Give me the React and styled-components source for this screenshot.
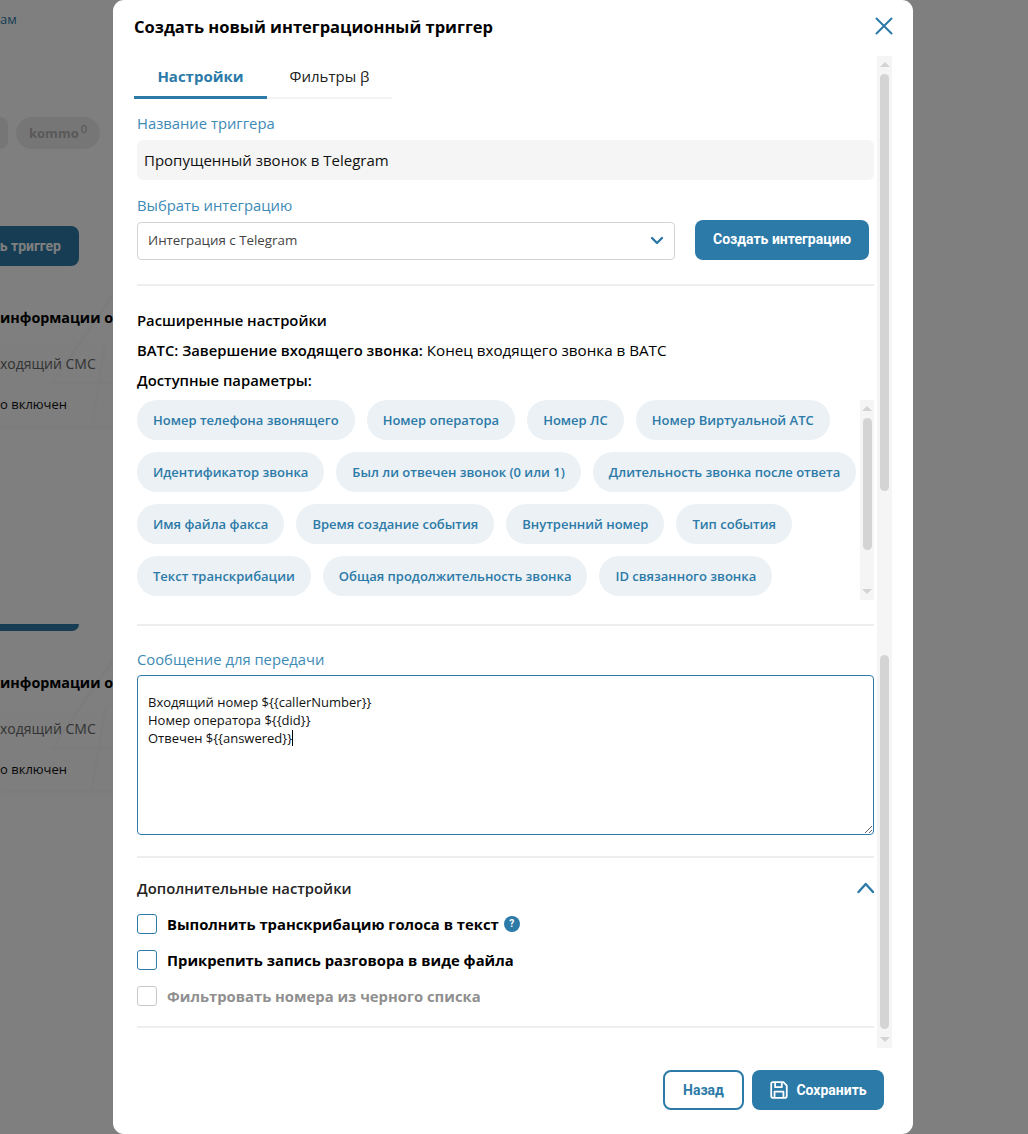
import React from "react";
import styled, { createGlobalStyle } from "styled-components";

const blue = "#2c7aa8";

const Global = createGlobalStyle`
  html, body { margin: 0; padding: 0; overflow: hidden; background: #fff; }
  * { box-sizing: border-box; }
  body { font-family: "Open Sans", "Liberation Sans", sans-serif; color: #000; }
`;

const Page = styled.div`
  position: relative;
  width: 1028px;
  height: 1134px;
  overflow: hidden;
`;

/* page behind the dialog */
const BackColumn = styled.div`
  width: 113px;
  height: 1134px;
  overflow: hidden;
  display: flex;
  flex-direction: column;
  white-space: nowrap;
`;
const BackLink = styled.div`
  margin-top: 10px;
  height: 18px;
  font-size: 13px;
  line-height: 18px;
  color: ${blue};
`;
const BackChips = styled.div`
  display: flex;
  gap: 8px;
  margin: 89px 0 0 0;
`;
const BackChip = styled.div`
  height: 32px;
  width: ${(p) => p.$w}px;
  border-radius: ${(p) => p.$radius};
  background: #ececec;
  font-size: 13px;
  font-weight: 700;
  color: #b2b2b2;
  display: flex;
  align-items: center;
  justify-content: center;
  sup { font-size: 11px; font-weight: 400; margin: -10px 0 0 2px; color: #aaa; }
`;
const BackButton = styled.div`
  margin: 77px 0 0 0;
  width: 79px;
  height: 40px;
  border-radius: 0 8px 8px 0;
  background: ${blue};
  color: #fff;
  font: 700 14px Roboto, sans-serif;
  display: flex;
  align-items: center;
  justify-content: flex-end;
  padding-right: 18px;
`;
const BackBar = styled.div`
  margin: 199px 0 0 0;
  width: 79px;
  height: 7px;
  border-radius: 0 0 8px 0;
  background: ${blue};
`;
const BackCard = styled.div`
  position: relative;
  width: 113px;
  height: 140px;
  margin-top: ${(p) => p.$top}px;
  background: linear-gradient(#ffffff, #fcfcfc);
  box-shadow: 0 3px 6px rgba(0, 0, 0, 0.04);
  display: flex;
  flex-direction: column;
  svg { position: absolute; inset: 0; }
`;
const BackTitle = styled.div`
  position: relative;
  margin: 22px 0 0 0;
  height: 22px;
  font-size: 14.3px;
  line-height: 22px;
  font-weight: 700;
`;
const BackSub = styled.div`
  position: relative;
  margin: 25px 0 0 0;
  height: 20px;
  font-size: 14px;
  line-height: 20px;
  color: #666;
`;
const BackNote = styled.div`
  position: relative;
  margin: 21px 0 0 0;
  height: 18px;
  font-size: 13px;
  line-height: 18px;
  color: #111;
`;
const Shade = styled.div`
  position: absolute;
  inset: 0;
  background: rgba(0, 0, 0, 0.5);
`;

/* dialog */
const Modal = styled.div`
  position: absolute;
  left: 113px;
  top: 0;
  width: 800px;
  height: 1134px;
  background: #fff;
  border-radius: 11px;
  padding: 0 21px;
  display: flex;
  flex-direction: column;
`;
const Header = styled.div`
  height: 56px;
  display: flex;
  justify-content: space-between;
  align-items: flex-start;
`;
const Title = styled.h2`
  margin: 15px 0 0;
  font-size: 16.5px;
  line-height: 24px;
  font-weight: 700;
`;
const CloseIcon = styled.svg`
  width: 18px;
  height: 18px;
  margin: 17px -1px 0 0;
  fill: none;
  stroke: ${blue};
  stroke-width: 2;
  stroke-linecap: round;
`;
const Body = styled.div`
  width: 758px;
  height: 992px;
  display: flex;
`;
const Content = styled.div`
  width: 743px;
  display: flex;
  flex-direction: column;
`;
const Tabs = styled.div`
  display: flex;
  width: 258px;
  height: 43px;
  border-bottom: 2px solid #f3f3f3;
`;
const Tab = styled.div`
  width: ${(p) => (p.$active ? 133 : 125)}px;
  height: 43px;
  text-align: center;
  padding-top: 9px;
  font-size: 15px;
  line-height: 22px;
  font-weight: ${(p) => (p.$active ? 700 : 400)};
  color: ${(p) => (p.$active ? blue : "#222")};
  border-bottom: ${(p) => (p.$active ? `3px solid ${blue}` : "none")};
`;
const Section = styled.div`
  padding: 0 3px;
  display: flex;
  flex-direction: column;
`;
const Label = styled.div`
  font-size: 14.8px;
  line-height: 20px;
  color: #3d8ab5;
  margin-top: ${(p) => p.$top}px;
  margin-bottom: ${(p) => p.$bottom}px;
`;
const NameInput = styled.div`
  height: 40px;
  border-radius: 6px;
  background: #f5f5f5;
  padding: 0 7px;
  font-size: 15px;
  line-height: 40px;
  color: #111;
`;
const SelectRow = styled.div`
  display: flex;
  align-items: center;
  gap: 20px;
  height: 40px;
  margin-top: -2px;
  padding-right: 5px;
`;
const Select = styled.div`
  width: 538px;
  height: 38px;
  margin-top: 2px;
  border: 1px solid #d3d3d3;
  border-radius: 4px;
  padding: 0 10px 2px;
  display: flex;
  align-items: center;
  justify-content: space-between;
  font-size: 13.33px;
  color: #444;
`;
const Chevron = styled.svg`
  width: ${(p) => p.$size}px;
  height: ${(p) => p.$size}px;
  fill: none;
  stroke: ${blue};
  stroke-width: ${(p) => p.$stroke};
  stroke-linecap: round;
  stroke-linejoin: round;
`;
const PrimaryButton = styled.button`
  height: 40px;
  width: ${(p) => p.$w}px;
  border: none;
  border-radius: 8px;
  background: ${blue};
  color: #fff;
  font: 700 14px Roboto, sans-serif;
  display: flex;
  align-items: center;
  justify-content: center;
  gap: 7px;
  padding: 0 0 ${(p) => p.$lift || 0}px;
`;
const Divider = styled.div`
  height: 2px;
  background: #eeeeee;
  margin-top: ${(p) => p.$top}px;
`;
const Info = styled.div`
  font-size: ${(p) => (p.$weight ? 14.8 : 15.2)}px;
  line-height: 20px;
  margin-top: ${(p) => p.$top}px;
  font-weight: ${(p) => p.$weight || 400};
  b { font-weight: 600; font-size: 14.8px; }
`;
const ParamsBox = styled.div`
  display: flex;
  height: 200px;
  margin-top: 10px;
`;
const Chips = styled.div`
  flex: 1;
  display: flex;
  flex-wrap: wrap;
  gap: 12px;
  align-content: flex-start;
`;
const Chip = styled.div`
  height: 40px;
  border-radius: 20px;
  background: #ebf1f5;
  padding: 0 16px;
  font-size: 13px;
  line-height: 40px;
  font-weight: 600;
  color: ${blue};
  white-space: nowrap;
`;
const Track = styled.div`
  width: ${(p) => p.$w}px;
  height: 100%;
  background: #f5f5f5;
  display: flex;
  flex-direction: column;
  align-items: center;
  flex: none;
`;
const ArrowUp = styled.div`
  flex: none;
  width: 0;
  height: 0;
  margin: 6px 0 4px;
  border-left: 5px solid transparent;
  border-right: 5px solid transparent;
  border-bottom: 5px solid #d4d4d4;
`;
const ArrowDown = styled.div`
  flex: none;
  width: 0;
  height: 0;
  margin: auto 0 6px;
  border-left: 5px solid transparent;
  border-right: 5px solid transparent;
  border-top: 5px solid #d4d4d4;
`;
const Thumb = styled.div`
  flex: none;
  width: 9px;
  height: ${(p) => p.$h}px;
  margin-top: ${(p) => p.$top || 0}px;
  border-radius: 5px;
  background: #d4d4d4;
`;
const Message = styled.div`
  height: 160px;
  border: 1px solid ${blue};
  border-radius: 4px;
  padding: 17px 10px;
  font-size: 13px;
  line-height: 18px;
  color: #111;
  overflow: auto;
  resize: both;
  white-space: pre-wrap;
`;
const Caret = styled.span`
  display: inline-block;
  width: 1px;
  height: 16px;
  vertical-align: -3px;
  background: #000;
`;
const ExtraHeader = styled.div`
  display: flex;
  align-items: center;
  justify-content: space-between;
  height: 20px;
  margin-top: 20px;
  font-size: 14.8px;
  font-weight: 600;
  color: #222;
`;
const CheckRow = styled.label`
  display: flex;
  align-items: center;
  gap: 10px;
  height: 20px;
  margin-top: 16px;
  font-size: 14.8px;
  font-weight: 700;
  color: ${(p) => (p.$off ? "#8f8f8f" : "#000")};
`;
const Box = styled.span`
  width: 20px;
  height: 20px;
  border: 1px solid ${(p) => (p.$off ? "#c8c8c8" : blue)};
  border-radius: 3px;
  flex: none;
`;
const Help = styled.span`
  width: 16px;
  height: 16px;
  border-radius: 50%;
  background: ${blue};
  color: #fff;
  margin-left: -5px;
  font: 700 10px/16px Roboto, sans-serif;
  text-align: center;
`;
const Footer = styled.div`
  display: flex;
  justify-content: flex-end;
  gap: 8px;
  margin-top: 22px;
  padding-right: 8px;
  width: 758px;
`;
const OutlineButton = styled.button`
  width: 81px;
  height: 40px;
  border: 2px solid ${blue};
  border-radius: 8px;
  background: #fff;
  color: ${blue};
  font: 700 14px Roboto, sans-serif;
  padding: 0;
`;
const SaveIcon = styled.svg`
  width: 20px;
  height: 20px;
  fill: none;
  stroke: #fff;
  stroke-width: 1.6;
  stroke-linejoin: round;
`;

const params = [
  "Номер телефона звонящего", "Номер оператора", "Номер ЛС", "Номер Виртуальной АТС",
  "Идентификатор звонка", "Был ли отвечен звонок (0 или 1)", "Длительность звонка после ответа",
  "Имя файла факса", "Время создание события", "Внутренний номер", "Тип события",
  "Текст транскрибации", "Общая продолжительность звонка", "ID связанного звонка",
];

function CardArt() {
  return (
    <svg width="113" height="140" viewBox="0 0 113 140" fill="none" stroke="#f9f9f9" strokeWidth="3">
      <path d="M113 10 L52 98 H113 M92 140 L105 60" />
    </svg>
  );
}

function BackCardBlock({ top }) {
  return (
    <BackCard $top={top}>
      <CardArt />
      <BackTitle>информации о</BackTitle>
      <BackSub>ходящий СМС</BackSub>
      <BackNote>о включен</BackNote>
    </BackCard>
  );
}

export default function App() {
  return (
    <Page>
      <Global />
      <BackColumn>
        <BackLink>ам</BackLink>
        <BackChips>
          <BackChip $w={8} $radius="0 16px 16px 0" />
          <BackChip $w={84} $radius="16px">kommo<sup>0</sup></BackChip>
        </BackChips>
        <BackButton>ь триггер</BackButton>
        <BackCardBlock top={19} />
        <BackBar />
        <BackCardBlock top={19} />
      </BackColumn>
      <Shade />
      <Modal>
        <Header>
          <Title>Создать новый интеграционный триггер</Title>
          <CloseIcon viewBox="0 0 18 18">
            <path d="M1.5 1.5 L16.5 16.5 M16.5 1.5 L1.5 16.5" />
          </CloseIcon>
        </Header>
        <Body>
          <Content>
            <Tabs>
              <Tab $active>Настройки</Tab>
              <Tab>Фильтры β</Tab>
            </Tabs>
            <Section>
              <Label $top={14} $bottom={7}>Название триггера</Label>
              <NameInput>Пропущенный звонок в Telegram</NameInput>
              <Label $top={15} $bottom={7}>Выбрать интеграцию</Label>
              <SelectRow>
                <Select>
                  Интеграция с Telegram
                  <Chevron $size={14} $stroke={2.4} viewBox="0 0 14 14">
                    <path d="M2 5 L7 10 L12 5" />
                  </Chevron>
                </Select>
                <PrimaryButton $w={174} $lift={2}>Создать интеграцию</PrimaryButton>
              </SelectRow>
              <Divider $top={24} />
              <Info $top={24} $weight={600}>Расширенные настройки</Info>
              <Info $top={10}><b>ВАТС: Завершение входящего звонка:</b> Конец входящего звонка в ВАТС</Info>
              <Info $top={10} $weight={600}>Доступные параметры:</Info>
              <ParamsBox>
                <Chips>
                  {params.map((p) => <Chip key={p}>{p}</Chip>)}
                </Chips>
                <Track $w={14}>
                  <ArrowUp />
                  <Thumb $h={132} $top={3} />
                  <ArrowDown />
                </Track>
              </ParamsBox>
              <Divider $top={24} />
              <Label $top={23} $bottom={6}>Сообщение для передачи</Label>
              <Message>{"Входящий номер ${{callerNumber}}\nНомер оператора ${{did}}\nОтвечен ${{answered}}"}<Caret /></Message>
              <Divider $top={21} />
              <ExtraHeader>
                Дополнительные настройки
                <Chevron $size={18} $stroke={2.4} viewBox="0 0 18 18">
                  <path d="M2.5 13 L9.75 5 L17 13" />
                </Chevron>
              </ExtraHeader>
              <CheckRow>
                <Box />
                Выполнить транскрибацию голоса в текст
                <Help>?</Help>
              </CheckRow>
              <CheckRow>
                <Box />
                Прикрепить запись разговора в виде файла
              </CheckRow>
              <CheckRow $off>
                <Box $off />
                Фильтровать номера из черного списка
              </CheckRow>
              <Divider $top={20} />
            </Section>
          </Content>
          <Track $w={15}>
            <ArrowUp />
            <Thumb $h={417} $top={3} />
            <Thumb $h={374} $top={164} />
            <ArrowDown />
          </Track>
        </Body>
        <Footer>
          <OutlineButton>Назад</OutlineButton>
          <PrimaryButton $w={132}>
            <SaveIcon viewBox="0 0 18 18">
              <path d="M2 3.5 A1.5 1.5 0 0 1 3.5 2 H13 L16 5 V14.5 A1.5 1.5 0 0 1 14.5 16 H3.5 A1.5 1.5 0 0 1 2 14.5 Z" />
              <path d="M5.5 2 V6.5 H11.5 V2 M5 16 V10.5 H13 V16" />
            </SaveIcon>
            Сохранить
          </PrimaryButton>
        </Footer>
      </Modal>
    </Page>
  );
}
